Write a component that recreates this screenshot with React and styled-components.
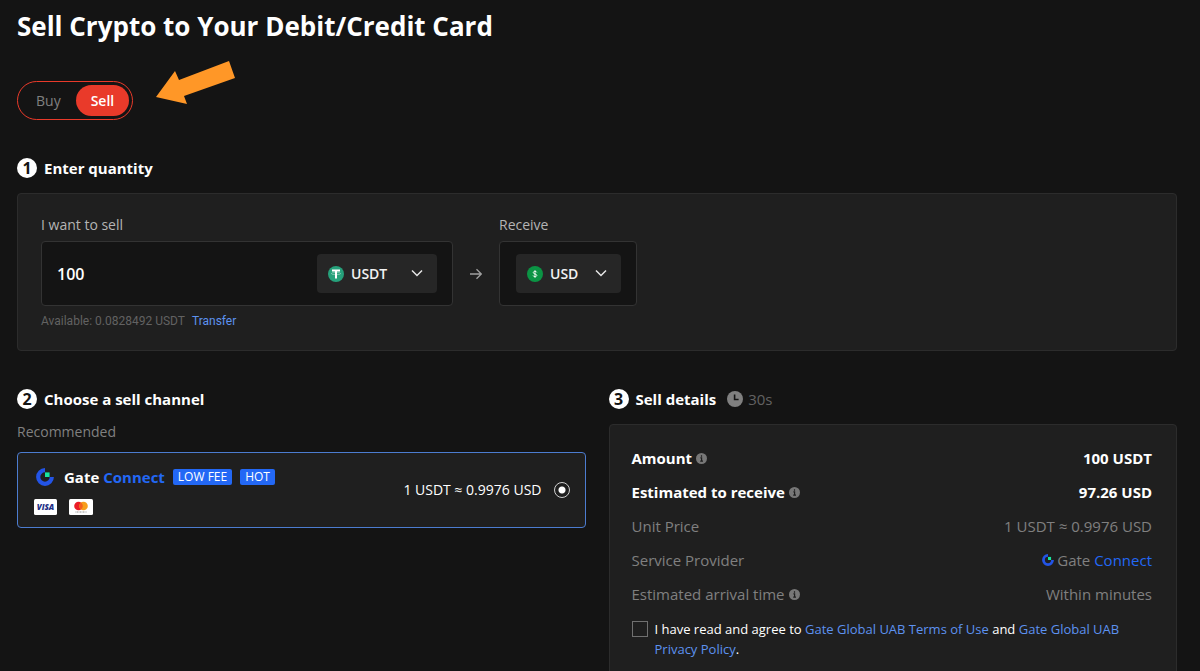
import React, { useState } from 'react';
import styled, { createGlobalStyle, css } from 'styled-components';

const colors = {
    page: '#141414',
    panel: '#1f1f1f',
    border: '#2c2c2c',
    control: '#262626',
    white: '#ffffff',
    label: '#b4b4b4',
    muted: '#808080',
    dim: '#626262',
    red: '#e93a2a',
    blue: '#2368f5',
    link: '#5d92f0',
};

const GlobalStyle = createGlobalStyle`
    * {
        box-sizing: border-box;
    }

    body {
        margin: 0;
        background: ${colors.page};
        color: ${colors.white};
        font-family: 'Open Sans', 'Noto Sans', sans-serif;
        font-size: 14px;
        line-height: 20px;
        overflow-x: hidden;
    }

    button, input, select {
        font-family: inherit;
        margin: 0;
    }
`;

const Page = styled.main`
    padding: 6px 23px 0 17px;
`;

const Title = styled.h1`
    margin: 0;
    font-size: 26px;
    line-height: 40px;
    font-weight: 700;
`;

// buy / sell switch and the arrow that points at it
const ModeRow = styled.div`
    display: flex;
    align-items: flex-end;
    gap: 23px;
    margin-top: 15px;
`;

const Toggle = styled.div`
    display: flex;
    padding: 3px;
    border: 1px solid ${colors.red};
    border-radius: 20px;
`;

const ToggleButton = styled.button`
    height: 31px;
    padding: 0 15px;
    border: 0;
    border-radius: 16px;
    font-size: 14px;
    line-height: 20px;
    cursor: pointer;
    background: transparent;
    color: ${colors.muted};

    ${({ $active }) => $active && css`
        background: ${colors.red};
        color: ${colors.white};
        font-weight: 600;
    `}
`;

// numbered section heading
const Heading = styled.h2`
    display: flex;
    align-items: center;
    gap: 7px;
    margin: 0;
    height: 20px;
    font-size: 15px;
    line-height: 20px;
    font-weight: 700;
`;

const StepNumber = styled.span`
    width: 20px;
    height: 20px;
    border-radius: 50%;
    background: ${colors.white};
    color: ${colors.page};
    font-size: 16px;
    text-align: center;
`;

const Countdown = styled.span`
    display: flex;
    align-items: center;
    gap: 5px;
    margin-left: 4px;
    font-weight: 400;
    color: ${colors.dim};
`;

const Section = styled.section`
    margin-top: 38px;
`;

const Panel = styled.div`
    background: ${colors.panel};
    border: 1px solid ${colors.border};
    border-radius: 4px;
`;

const QuantityPanel = styled(Panel)`
    display: flex;
    margin-top: 15px;
    padding: 21px 23px 19px;
`;

const Field = styled.div`
    display: flex;
    flex-direction: column;
    width: ${({ $width }) => $width};
`;

const Label = styled.label`
    color: ${colors.label};
    font-size: 14px;
    line-height: 20px;
`;

const FieldBox = styled.div`
    display: flex;
    align-items: center;
    justify-content: flex-end;
    height: 65px;
    margin-top: 6px;
    padding: 0 15px;
    background: ${colors.page};
    border: 1px solid #333333;
    border-radius: 4px;
`;

const AmountInput = styled.input`
    flex: 1;
    min-width: 0;
    padding: 0;
    border: 0;
    outline: 0;
    background: transparent;
    color: ${colors.white};
    font-size: 16px;
    font-weight: 600;
`;

const CurrencyPicker = styled.div`
    position: relative;
    flex: none;
    width: ${({ $width }) => $width};
    height: 39px;
    border-radius: 4px;
    background: ${colors.control};

    svg {
        position: absolute;
        pointer-events: none;
    }

    svg:first-child {
        left: 11px;
        top: 12px;
    }

    svg:last-child {
        right: 14px;
        top: 15px;
    }
`;

const CurrencySelect = styled.select`
    appearance: none;
    width: 100%;
    height: 100%;
    padding: 0 30px 0 34px;
    border: 0;
    outline: 0;
    background: transparent;
    color: #f2f2f2;
    font-size: 14px;
    font-weight: 600;
    cursor: pointer;
`;

const ArrowCell = styled.div`
    display: flex;
    align-items: center;
    justify-content: center;
    width: 46px;
    height: 65px;
    margin-top: 26px;
`;

const Available = styled.p`
    margin: 5px 0 0;
    color: ${colors.dim};
    font-family: Roboto, 'Open Sans', sans-serif;
    font-size: 12px;
    line-height: 20px;
`;

const Link = styled.a`
    color: ${colors.link};
    text-decoration: none;
`;

const TransferLink = styled(Link)`
    margin-left: 7px;
`;

const Columns = styled.div`
    display: grid;
    grid-template-columns: 1fr 1fr;
    gap: 23px;
    align-items: start;
`;

const Recommended = styled.p`
    margin: 13px 0 10px;
    color: ${colors.muted};
    font-size: 14px;
    line-height: 20px;
`;

const ChannelCard = styled.label`
    display: flex;
    align-items: center;
    justify-content: space-between;
    height: 76px;
    padding: 0 15px;
    border: 1px solid #4c7cd0;
    border-radius: 4px;
    background: ${colors.panel};
    cursor: pointer;
`;

const ChannelName = styled.div`
    display: flex;
    align-items: center;
    height: 24px;
    padding-left: 3px;
    font-size: 15px;
    font-weight: 700;
    white-space: pre;

    svg {
        margin-right: 10px;
    }
`;

const Brand = styled.span`
    color: ${colors.blue};
`;

const Tag = styled.span`
    margin-left: 8px;
    padding: 0 5px;
    border-radius: 2px;
    background: ${colors.blue};
    font-size: 12px;
    line-height: 16px;
    font-weight: 400;
`;

const CardLogos = styled.div`
    display: flex;
    gap: 12px;
    margin-top: 10px;
    padding-left: 1px;
`;

const Rate = styled.div`
    display: flex;
    align-items: center;
    gap: 12px;
    font-size: 14px;
`;

const Radio = styled.input`
    appearance: none;
    width: 16px;
    height: 16px;
    border: 1px solid #d0d0d0;
    border-radius: 50%;

    &:checked {
        background: radial-gradient(circle, ${colors.white} 0 3px, transparent 4px);
    }
`;

const DetailsPanel = styled(Panel)`
    margin-top: 15px;
    padding: 16px 24px 24px 22px;
`;

const DetailList = styled.dl`
    margin: 0;
`;

const DetailRow = styled.div`
    display: flex;
    justify-content: space-between;
    height: 34px;
    font-size: 15px;
    line-height: 34px;
    color: ${({ $strong }) => ($strong ? colors.white : colors.muted)};
    font-weight: ${({ $strong }) => ($strong ? 700 : 400)};

    dt, dd {
        display: flex;
        align-items: center;
        margin: 0;
        white-space: pre;
    }

    dt {
        gap: 4px;
    }

    dd {
        gap: 3px;
    }
`;

const Agreement = styled.div`
    display: flex;
    gap: 7px;
    margin-top: 8px;
    font-size: 13px;
    line-height: 20px;
`;

const AgreementText = styled.p`
    margin: 0;
`;

const Checkbox = styled.input`
    appearance: none;
    flex: none;
    width: 16px;
    height: 16px;
    margin-top: 2px;
    border: 1px solid #707070;

    &:checked {
        background: ${colors.blue};
    }
`;

const PointerArrow = () => (
    <svg width="80" height="59" viewBox="0 0 80 59" aria-hidden="true">
        <path d="M0 36 19 10 23 19 73 0 79 17 28 35 31 43Z" fill="#ff9727" />
    </svg>
);

const TetherIcon = () => (
    <svg width="16" height="16" viewBox="0 0 16 16" aria-hidden="true">
        <circle cx="8" cy="8" r="8" fill="#26a17b" />
        <path d="M4 4.5h8M8 4.5v8" stroke="#fff" strokeWidth="2" />
        <ellipse cx="8" cy="7.6" rx="4.6" ry="1.1" fill="none" stroke="#fff" strokeOpacity=".6" strokeWidth=".6" />
    </svg>
);

const DollarIcon = () => (
    <svg width="16" height="16" viewBox="0 0 16 16" aria-hidden="true">
        <circle cx="8" cy="8" r="8" fill="#0b9444" />
        <path
            d="M9.8 6.4C9.5 5.6 8.9 5.3 8 5.3c-1 0-1.7.5-1.7 1.3 0 1.9 3.5.9 3.5 2.8 0 .8-.8 1.3-1.8 1.3s-1.7-.4-1.9-1.2M8 4.3v7.4"
            fill="none" stroke="#fff" strokeWidth=".9"
        />
    </svg>
);

const Chevron = () => (
    <svg width="12" height="8" viewBox="0 0 12 8" aria-hidden="true">
        <path d="M1 1.5 6 6.5 11 1.5" fill="none" stroke="#e6e6e6" strokeWidth="1.5" />
    </svg>
);

const RightArrow = () => (
    <svg width="12" height="12" viewBox="0 0 12 12" aria-hidden="true">
        <path d="M0 6h11M6.5 1.2 11.3 6 6.5 10.8" fill="none" stroke="#a0a0a0" strokeWidth="1.3" />
    </svg>
);

const ClockIcon = () => (
    <svg width="16" height="16" viewBox="0 0 16 16" aria-hidden="true">
        <circle cx="8" cy="8" r="8" fill="#808080" />
        <path d="M7.6 3.5v5h4" fill="none" stroke="#141414" strokeWidth="1.6" />
    </svg>
);

const InfoIcon = () => (
    <svg width="11" height="11" viewBox="0 0 11 11" role="img" aria-label="Info">
        <circle cx="5.5" cy="5.5" r="5.5" fill="#777" />
        <path d="M5.5 2.2v1.5M4.4 4.9h1.2v3M4.2 8.2h2.8" fill="none" stroke="#1f1f1f" strokeWidth="1.2" />
    </svg>
);

const GateIcon = ({ size }) => (
    <svg width={size} height={size} viewBox="0 0 18 18" aria-hidden="true">
        <path d="M9 2.2a6.8 6.8 0 1 0 6.8 6.8" fill="none" stroke="#2354e6" strokeWidth="4.2" />
        <path d="M9 4.4h4.6V9H9z" fill="#17e5a1" />
    </svg>
);

const VisaLogo = () => (
    <svg width="23" height="16" viewBox="0 0 23 16" role="img" aria-label="Visa">
        <rect width="23" height="16" rx="1.5" fill="#fff" />
        <text
            x="11.5" y="10.8" textAnchor="middle" fill="#1c2f86"
            fontFamily="Open Sans, sans-serif" fontSize="8" fontWeight="800" fontStyle="italic"
        >
            VISA
        </text>
    </svg>
);

const MastercardLogo = () => (
    <svg width="24" height="16" viewBox="0 0 24 16" role="img" aria-label="Mastercard">
        <rect width="24" height="16" rx="1.5" fill="#fff" />
        <circle cx="9.5" cy="7" r="4.3" fill="#eb1c26" />
        <circle cx="14.5" cy="7" r="4.3" fill="#f79e1b" />
        <path d="M12 3.5a4.3 4.3 0 0 1 0 7 4.3 4.3 0 0 1 0-7" fill="#f2601f" />
        <path d="M6.5 13h11" stroke="#777" strokeWidth=".8" strokeDasharray="1 .5" />
    </svg>
);

const details = [
    { label: 'Amount', value: '100 USDT', strong: true, info: true },
    { label: 'Estimated to receive', value: '97.26 USD', strong: true, info: true },
    { label: 'Unit Price', value: '1 USDT ≈ 0.9976 USD' },
    {
        label: 'Service Provider',
        value: <><GateIcon size={12} /><span>Gate <Brand>Connect</Brand></span></>,
    },
    { label: 'Estimated arrival time', value: 'Within minutes', info: true },
];

const Currency = ({ id, label, code, width, icon }) => (
    <CurrencyPicker $width={width}>
        {icon}
        <CurrencySelect id={id} aria-label={label} defaultValue={code}>
            <option>{code}</option>
        </CurrencySelect>
        <Chevron />
    </CurrencyPicker>
);

const App = () => {
    const [mode, setMode] = useState('Sell');
    const [amount, setAmount] = useState('100');

    return (
        <Page>
            <GlobalStyle />
            <Title>Sell Crypto to Your Debit/Credit Card</Title>
            <ModeRow>
                <Toggle>
                    {['Buy', 'Sell'].map(name => (
                        <ToggleButton
                            key={name}
                            type="button"
                            $active={mode === name}
                            aria-pressed={mode === name}
                            onClick={() => setMode(name)}
                        >
                            {name}
                        </ToggleButton>
                    ))}
                </Toggle>
                <PointerArrow />
            </ModeRow>

            <Section>
                <Heading><StepNumber>1</StepNumber>Enter quantity</Heading>
                <QuantityPanel>
                    <Field $width="412px">
                        <Label htmlFor="amount">I want to sell</Label>
                        <FieldBox>
                            <AmountInput
                                id="amount"
                                inputMode="decimal"
                                value={amount}
                                onChange={e => setAmount(e.target.value)}
                            />
                            <Currency label="Sell currency" code="USDT" width="120px" icon={<TetherIcon />} />
                        </FieldBox>
                        <Available>
                            Available: 0.0828492 USDT
                            <TransferLink href="#transfer">Transfer</TransferLink>
                        </Available>
                    </Field>
                    <ArrowCell><RightArrow /></ArrowCell>
                    <Field $width="138px">
                        <Label htmlFor="receive">Receive</Label>
                        <FieldBox>
                            <Currency id="receive" code="USD" width="105px" icon={<DollarIcon />} />
                        </FieldBox>
                    </Field>
                </QuantityPanel>
            </Section>

            <Columns>
                <Section>
                    <Heading><StepNumber>2</StepNumber>Choose a sell channel</Heading>
                    <Recommended>Recommended</Recommended>
                    <ChannelCard>
                        <div>
                            <ChannelName>
                                <GateIcon size={18} />
                                Gate <Brand>Connect</Brand>
                                <Tag>LOW FEE</Tag>
                                <Tag>HOT</Tag>
                            </ChannelName>
                            <CardLogos>
                                <VisaLogo />
                                <MastercardLogo />
                            </CardLogos>
                        </div>
                        <Rate>
                            1 USDT ≈ 0.9976 USD
                            <Radio type="radio" name="channel" defaultChecked />
                        </Rate>
                    </ChannelCard>
                </Section>

                <Section>
                    <Heading>
                        <StepNumber>3</StepNumber>
                        Sell details
                        <Countdown><ClockIcon />30s</Countdown>
                    </Heading>
                    <DetailsPanel>
                        <DetailList>
                            {details.map(({ label, value, strong, info }) => (
                                <DetailRow key={label} $strong={strong}>
                                    <dt>{label}{info && <InfoIcon />}</dt>
                                    <dd>{value}</dd>
                                </DetailRow>
                            ))}
                        </DetailList>
                        <Agreement>
                            <Checkbox type="checkbox" id="agree" />
                            <AgreementText>
                                <label htmlFor="agree">I have read and agree to</label>{' '}
                                <Link href="#terms">Gate Global UAB Terms of Use</Link> and{' '}
                                <Link href="#privacy">Gate Global UAB Privacy Policy</Link>.
                            </AgreementText>
                        </Agreement>
                    </DetailsPanel>
                </Section>
            </Columns>
        </Page>
    );
};

export default App;
